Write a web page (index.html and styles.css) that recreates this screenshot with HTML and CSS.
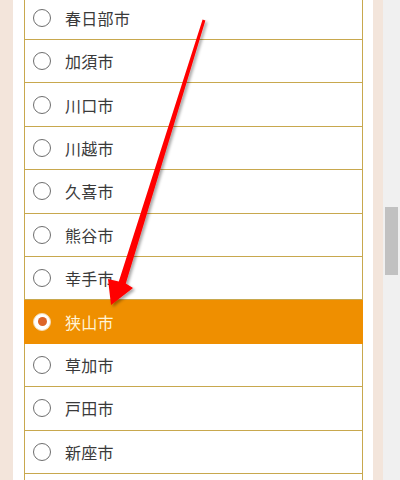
FILE: index.html
```html
<!DOCTYPE html>
<html lang="ja">
<head>
<meta charset="utf-8">
<link rel="stylesheet" href="styles.css">
</head>
<body>
<div class="page">
  <div class="frame frame-left"></div>
  <div class="main">
    <ul class="city-list">
      <li class="row"><span class="radio"></span><span class="label">春日部市</span></li>
      <li class="row"><span class="radio"></span><span class="label">加須市</span></li>
      <li class="row"><span class="radio"></span><span class="label">川口市</span></li>
      <li class="row"><span class="radio"></span><span class="label">川越市</span></li>
      <li class="row"><span class="radio"></span><span class="label">久喜市</span></li>
      <li class="row"><span class="radio"></span><span class="label">熊谷市</span></li>
      <li class="row"><span class="radio"></span><span class="label">幸手市</span></li>
      <li class="row selected"><span class="radio"></span><span class="label">狭山市</span></li>
      <li class="row"><span class="radio"></span><span class="label">草加市</span></li>
      <li class="row"><span class="radio"></span><span class="label">戸田市</span></li>
      <li class="row"><span class="radio"></span><span class="label">新座市</span></li>
      <li class="row row-empty"></li>
    </ul>
  </div>
  <div class="frame frame-right"></div>
  <div class="scrollbar"><div class="thumb"></div></div>
</div>
<svg class="arrow" width="400" height="480" viewBox="0 0 400 480">
  <defs>
    <filter id="shadow" x="-20%" y="-20%" width="140%" height="140%">
      <feDropShadow dx="2" dy="2" stdDeviation="1.6" flood-color="#000" flood-opacity="0.35"/>
    </filter>
  </defs>
  <polygon filter="url(#shadow)" fill="#ff0000"
    points="202.6,19.6 205.4,20.4 125.8,283.5 133,288 111,305 108,279 118.8,281.4"/>
</svg>
</body>
</html>
```
FILE: styles.css
```css
html, body {
  margin: 0;
  padding: 0;
}
body {
  width: 400px;
  height: 480px;
  overflow: hidden;
  position: relative;
  background: #ffffff;
  font-family: "Noto Sans CJK JP", "Noto Sans", sans-serif;
}
.page {
  display: flex;
  height: 480px;
  overflow: hidden;
}
.frame {
  background: #f3e5db;
}
.frame-left {
  width: 13px;
}
.frame-right {
  width: 10px;
}
.main {
  flex: 1;
  background: #ffffff;
  padding: 0 10px 0 11px;
  overflow: hidden;
}
.city-list {
  list-style: none;
  margin: -4.4px 0 0 0;
  padding: 0;
  border-top: 1px solid #c8a84e;
}
.row {
  box-sizing: border-box;
  height: 43.4px;
  display: flex;
  align-items: center;
  padding-left: 8px;
  border: 1px solid #c8a84e;
  border-top: none;
  color: #3a3a3a;
  font-size: 16px;
}
.row-empty {
  height: 10px;
  border-bottom: none;
}
.radio {
  box-sizing: border-box;
  width: 18px;
  height: 18px;
  border: 1px solid #6e6e6e;
  border-radius: 50%;
  background: #ffffff;
  margin-right: 14px;
  flex: none;
  display: flex;
  align-items: center;
  justify-content: center;
}
.label {
  line-height: 1;
  letter-spacing: 0.3px;
}
.row.selected {
  background: #ef8f00;
  border-color: #ef8f00;
  color: #fff4d6;
}
.row.selected .radio {
  border-color: #f5d9b0;
}
.row.selected .radio::after {
  content: "";
  width: 9px;
  height: 9px;
  border-radius: 50%;
  background: #dd6428;
}
.scrollbar {
  width: 17px;
  background: #f0f0f0;
  padding: 207px 2px 0 2px;
  box-sizing: border-box;
}
.thumb {
  height: 68px;
  background: #c1c1c1;
}
.arrow {
  position: absolute;
  left: 0;
  top: 0;
}
```
